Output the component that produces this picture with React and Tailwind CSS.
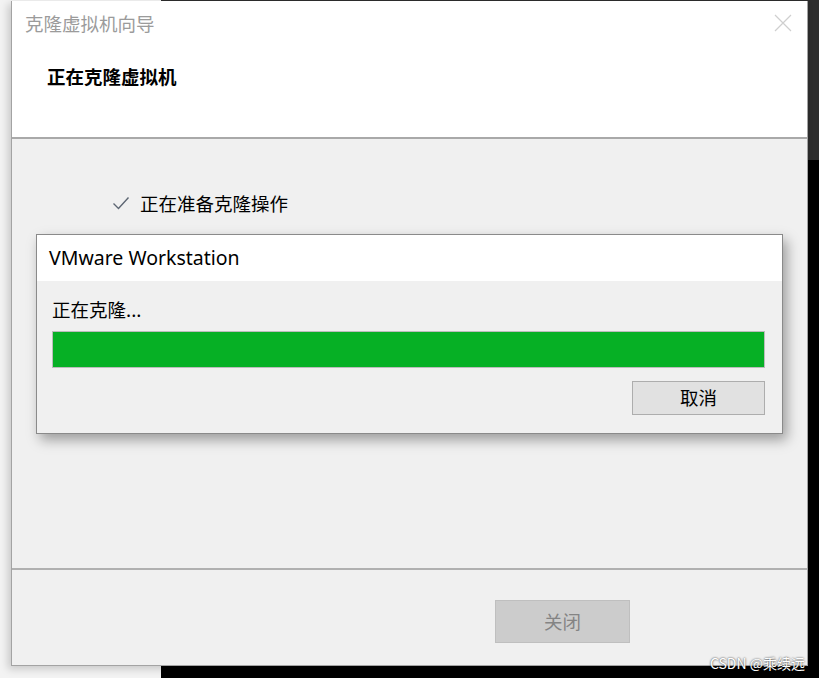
import React from 'react';

const cjk = "font-['Microsoft_YaHei','Noto_Sans_CJK_SC',sans-serif]";
const latin = "font-['Segoe_UI','Noto_Sans','Noto_Sans_CJK_SC',sans-serif]";

function CloseX() {
  return (
    <svg width="18" height="18" viewBox="0 0 18 18" className="absolute right-[15px] top-[13px]">
      <path d="M1 1 L17 17 M17 1 L1 17" stroke="#cfcfcf" strokeWidth="1.2" fill="none" />
    </svg>
  );
}

function Check() {
  return (
    <svg width="18" height="16" viewBox="0 0 18 16" className="shrink-0">
      <polyline points="1.5,8.5 6.5,13.5 16.5,2.5" stroke="#5d6673" strokeWidth="1.4" fill="none" />
    </svg>
  );
}

function CloneDialog() {
  return (
    <div className="absolute left-[24px] top-[233px] w-[747px] h-[200px] border border-[#8a8a8a] bg-[#f0f0f0] shadow-[4px_6px_12px_rgba(0,0,0,0.35)] flex flex-col">
      <div className={`h-[46px] bg-white flex items-center pl-[12px] text-[19.5px] text-black ${latin}`}>
        VMware Workstation
      </div>
      <div className="flex-1 flex flex-col px-[15px]">
        <div className={`mt-[16px] h-[26px] flex items-center text-[18.5px] text-black ${cjk}`}>正在克隆...</div>
        <div className="mt-[8px] h-[37px] w-[713px] border border-[#bcbcbc] bg-[#e6e6e6]">
          <div className="h-full bg-[#06b025]" style={{ width: '100%' }} />
        </div>
        <div className="mt-[13px] flex justify-end pr-[2px]">
          <button className={`w-[133px] h-[34px] border border-[#adadad] bg-[#e1e1e1] text-[18.5px] text-black flex items-center justify-center ${cjk}`}>
            取消
          </button>
        </div>
      </div>
    </div>
  );
}

export default function App() {
  return (
    <div className="relative w-[819px] h-[678px] overflow-hidden bg-[#f3f3f3]">
      {/* desktop behind the wizard */}
      <div className="absolute left-[161px] top-0 right-0 bottom-0 bg-black" />
      <div className="absolute left-[161px] top-0 right-0 h-[160px] bg-[#2d2d2d]" />

      <div className="absolute left-[11px] top-[1px] w-[797px] h-[665px] border-x border-b border-[#a3a3a3] bg-[#f0f0f0] shadow-[-3px_3px_8px_rgba(0,0,0,0.18)] flex flex-col">
        <div className="relative h-[136px] bg-white">
          <div className={`pt-[10px] pl-[13px] h-[34px] text-[18.5px] leading-[24px] text-[#9b9b9b] ${cjk}`}>克隆虚拟机向导</div>
          <div className={`mt-[29px] pl-[35px] text-[18.5px] leading-[24px] font-bold text-black ${cjk}`}>正在克隆虚拟机</div>
          <CloseX />
        </div>
        <div className="h-[2px] bg-[#a9a9a9]" />
        <div className="relative flex-1">
          <div className={`mt-[52px] pl-[100px] flex items-center gap-[10px] text-[18.5px] leading-[24px] text-black ${cjk}`}>
            <Check />
            <span>正在准备克隆操作</span>
          </div>
        </div>
        <div className="h-[2px] bg-[#b0b0b0]" />
        <div className="h-[95px] flex justify-start pl-[483px] pt-[30px]">
          <button className={`w-[135px] h-[43px] border border-[#bfbfbf] bg-[#cccccc] text-[18.5px] text-[#848484] flex items-center justify-center ${cjk}`}>
            关闭
          </button>
        </div>
        <CloneDialog />
      </div>

      <div className={`absolute right-[14px] bottom-[7px] text-[14px] leading-[16px] text-white [text-shadow:0_0_2px_rgba(0,0,0,0.9)] ${cjk}`}>
        CSDN @乘续远
      </div>
    </div>
  );
}
